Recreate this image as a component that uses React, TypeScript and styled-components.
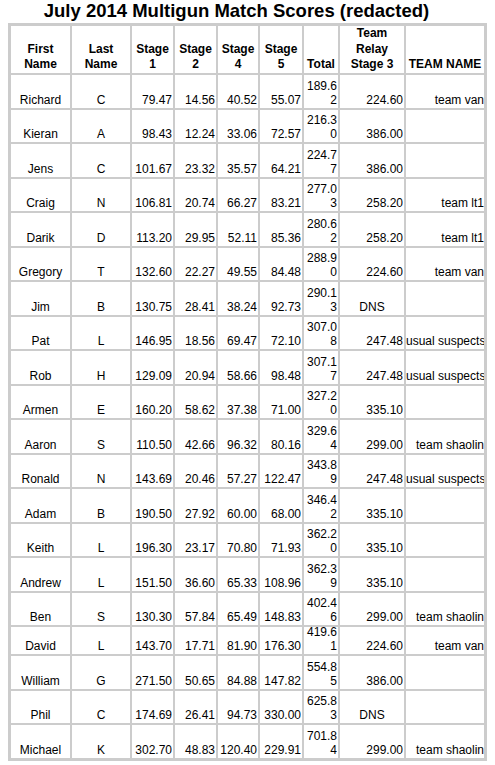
import React from "react"
import styled, { createGlobalStyle } from "styled-components"

const GlobalStyle = createGlobalStyle`
  html, body {
    margin: 0;
    overflow: hidden;
  }
  body {
    padding: 0 8px;
    background: #ffffff;
    color: #000000;
    font-family: "Liberation Sans", Arial, sans-serif;
  }
`

const Title = styled.div`
  font-size: 18.5px;
  font-weight: bold;
  line-height: 21px;
  text-align: center;
  padding-right: 22px;
  margin-bottom: 2px;
`

const Table = styled.table`
  width: 479px;
  table-layout: fixed;
  border-collapse: separate;
  border-spacing: 0;
  border: 2px solid #cccccc;
  font-size: 12px;
`

const HeadRow = styled.tr`
  height: 49px;
`

const Row = styled.tr<{ $h: number }>`
  height: ${({ $h }) => $h}px;
`

const HeadCell = styled.th`
  border: 1px solid #cccccc;
  padding: 0 1px;
  vertical-align: bottom;
  text-align: center;
  font-weight: bold;
  line-height: 15.6px;
`

const Cell = styled.td<{ $tight?: boolean }>`
  border: 1px solid #cccccc;
  padding: 0 ${({ $tight }) => ($tight ? 0 : 1)}px;
  vertical-align: bottom;
`

const Clip = styled.div<{ $h: number; $align: string; $wrap?: boolean }>`
  height: ${({ $h }) => $h}px;
  display: flex;
  flex-direction: column;
  justify-content: flex-end;
  overflow: hidden;
  line-height: 14px;
  padding-bottom: 1px;
  box-sizing: border-box;
  text-align: ${({ $align }) => $align};
  white-space: ${({ $wrap }) => ($wrap ? "normal" : "nowrap")};
  word-break: ${({ $wrap }) => ($wrap ? "break-all" : "normal")};
`

const widths = [61, 60, 43, 43, 42, 44, 36, 66, 80]

type Score = [string, string, string, string, string, string, string, string, string]

const scores: Score[] = [
  ["Richard", "C", "79.47", "14.56", "40.52", "55.07", "189.62", "224.60", "team van"],
  ["Kieran", "A", "98.43", "12.24", "33.06", "72.57", "216.30", "386.00", ""],
  ["Jens", "C", "101.67", "23.32", "35.57", "64.21", "224.77", "386.00", ""],
  ["Craig", "N", "106.81", "20.74", "66.27", "83.21", "277.03", "258.20", "team lt1"],
  ["Darik", "D", "113.20", "29.95", "52.11", "85.36", "280.62", "258.20", "team lt1"],
  ["Gregory", "T", "132.60", "22.27", "49.55", "84.48", "288.90", "224.60", "team van"],
  ["Jim", "B", "130.75", "28.41", "38.24", "92.73", "290.13", "DNS", ""],
  ["Pat", "L", "146.95", "18.56", "69.47", "72.10", "307.08", "247.48", "usual suspects"],
  ["Rob", "H", "129.09", "20.94", "58.66", "98.48", "307.17", "247.48", "usual suspects"],
  ["Armen", "E", "160.20", "58.62", "37.38", "71.00", "327.20", "335.10", ""],
  ["Aaron", "S", "110.50", "42.66", "96.32", "80.16", "329.64", "299.00", "team shaolin"],
  ["Ronald", "N", "143.69", "20.46", "57.27", "122.47", "343.89", "247.48", "usual suspects"],
  ["Adam", "B", "190.50", "27.92", "60.00", "68.00", "346.42", "335.10", ""],
  ["Keith", "L", "196.30", "23.17", "70.80", "71.93", "362.20", "335.10", ""],
  ["Andrew", "L", "151.50", "36.60", "65.33", "108.96", "362.39", "335.10", ""],
  ["Ben", "S", "130.30", "57.84", "65.49", "148.83", "402.46", "299.00", "team shaolin"],
  ["David", "L", "143.70", "17.71", "81.90", "176.30", "419.61", "224.60", "team van"],
  ["William", "G", "271.50", "50.65", "84.88", "147.82", "554.85", "386.00", ""],
  ["Phil", "C", "174.69", "26.41", "94.73", "330.00", "625.83", "DNS", ""],
  ["Michael", "K", "302.70", "48.83", "120.40", "229.91", "701.84", "299.00", "team shaolin"],
]

// david's row is shorter in the sheet, its total gets clipped on top
const rowHeight = (name: string) => (name === "David" ? 29.3 : 34.5)

const alignFor = (col: number, value: string) => {
  if (col < 2) return "center"
  if (value === "DNS") return "center"
  return "right"
}

export default function App() {
  return (
    <>
      <GlobalStyle />
      <Title>July 2014 Multigun Match Scores (redacted)</Title>
      <Table>
        <colgroup>
          {widths.map((w, i) => (
            <col key={i} style={{ width: w }} />
          ))}
        </colgroup>
        <thead>
          <HeadRow>
            <HeadCell>First<br />Name</HeadCell>
            <HeadCell>Last<br />Name</HeadCell>
            <HeadCell>Stage<br />1</HeadCell>
            <HeadCell>Stage<br />2</HeadCell>
            <HeadCell>Stage<br />4</HeadCell>
            <HeadCell>Stage<br />5</HeadCell>
            <HeadCell>Total</HeadCell>
            <HeadCell>Team<br />Relay<br />Stage 3</HeadCell>
            <HeadCell>TEAM NAME</HeadCell>
          </HeadRow>
        </thead>
        <tbody>
          {scores.map((row) => {
            const h = rowHeight(row[0])
            return (
              <Row key={row[0]} $h={h}>
                {row.map((v, i) => (
                  <Cell key={i} $tight={i === 8}>
                    <Clip $h={h - 2} $align={alignFor(i, v)} $wrap={i === 6}>
                      {v}
                    </Clip>
                  </Cell>
                ))}
              </Row>
            )
          })}
        </tbody>
      </Table>
    </>
  )
}
